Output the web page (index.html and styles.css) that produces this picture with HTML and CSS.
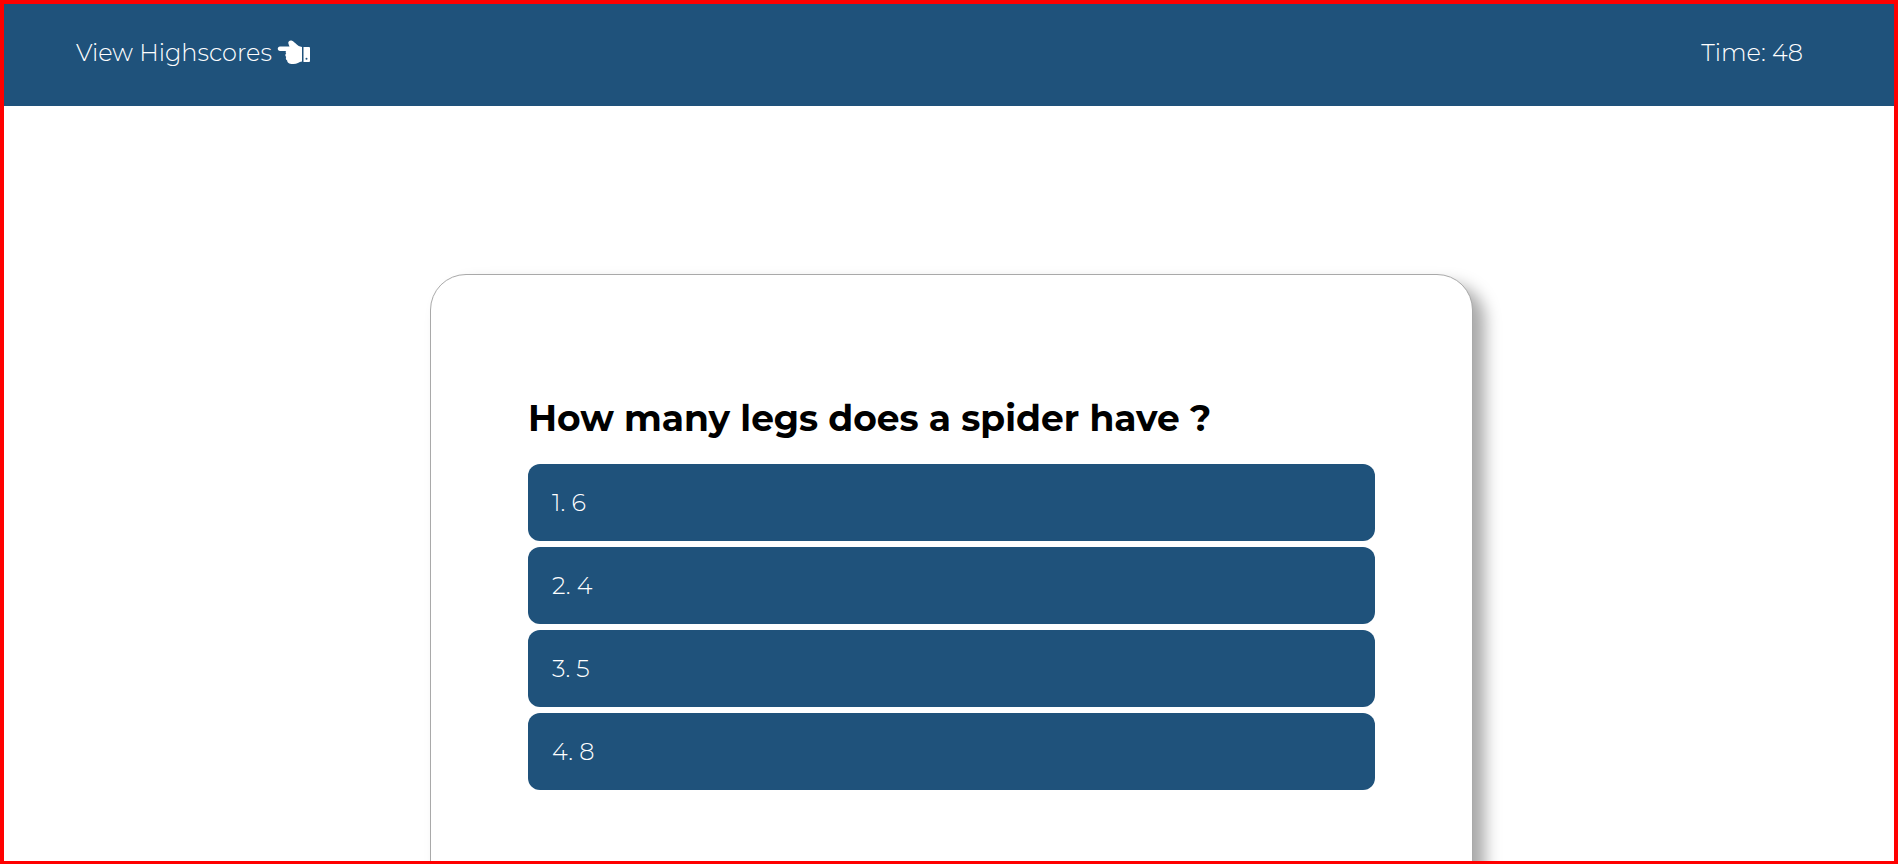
FILE: index.html
```html
<!DOCTYPE html>
<html lang="en">
<head>
  <meta charset="utf-8">
  <meta name="viewport" content="width=device-width, initial-scale=1">
  <title>Quiz</title>
  <link rel="stylesheet" href="styles.css">
</head>
<body>
  <header class="topbar">
    <a class="scores-link" href="#highscores">View Highscores
      <svg class="hand" viewBox="0 0 34 26" aria-hidden="true">
        <path fill="#fff" d="M3 6.500H12.500L11.500 4C10.500 1.500 13 0 15 .8C18 2 20 6.500 25 7V21.500C22 22 20 24 16.500 24C12.500 24.300 10 22.500 10.200 20.500C8.500 19.500 8.700 17.800 9.200 17C7.800 15.500 8.300 14 9.200 13.200C8.200 12.500 8.600 11.300 9.300 11H3C0 10.800 0 6.600 3 6.500Z"/>
        <path fill="#fff" d="M26.500 7H32Q33 7 33 8V21Q33 22 32 22H26.500Z"/>
        <circle cx="29.500" cy="18.800" r="1" fill="#1f527b"/>
      </svg>
    </a>
    <p class="timer">Time: 48</p>
  </header>
  <main class="stage">
    <section class="card">
      <h1 class="question">How many legs does a spider have ?</h1>
      <div class="answers">
        <button class="answer" type="button">1. 6</button>
        <button class="answer" type="button">2. 4</button>
        <button class="answer" type="button">3. 5</button>
        <button class="answer" type="button">4. 8</button>
      </div>
    </section>
  </main>
</body>
</html>
```
FILE: styles.css
```css
* {
  box-sizing: border-box;
}

body {
  margin: 0;
  height: 100vh;
  overflow: hidden;
  border: 4px solid #f00;
  border-bottom-width: 3px;
  background: #fff;
  color: #000;
  font-family: Montserrat, Inter, sans-serif;
  font-size: 24px;
  font-weight: 300;
}

.topbar {
  display: flex;
  justify-content: space-between;
  align-items: center;
  padding: 33px 91px 37px 72px;
  line-height: 32px;
  background: #1f527b;
  color: #fff;
}

.scores-link {
  display: flex;
  align-items: center;
  gap: 5px;
  color: inherit;
  text-decoration: none;
}

.hand {
  width: 34px;
  height: 26px;
}

.timer {
  margin: 0;
}

.stage {
  padding: 168px 0 100px 5px;
}

.card {
  max-width: 1043px;
  min-height: 720px;
  margin: 0 auto;
  padding: 121px 97px;
  border: 1px solid #a9a9a9;
  border-radius: 36px;
  background: #fff;
  box-shadow: 12px 10px 16px #a9a9a9;
}

.question {
  margin: 0 0 24px;
  font-size: 36px;
  font-weight: 700;
  line-height: 44px;
}

.answers {
  display: grid;
  gap: 6px;
}

.answer {
  padding: 24px;
  border: 0;
  border-radius: 12px;
  background: #1f527b;
  color: #fff;
  font: inherit;
  line-height: 29px;
  text-align: left;
}
```
